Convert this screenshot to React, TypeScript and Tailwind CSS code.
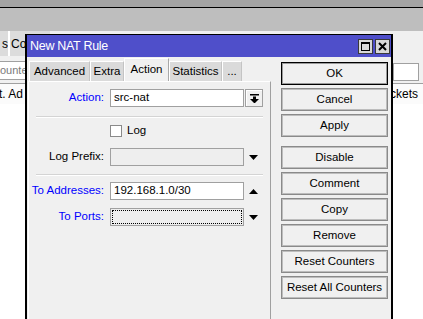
import React from "react";

const font = "font-['Liberation_Sans',Arial,sans-serif]";

function Btn({ label, def }: { label: string; def?: boolean }) {
  return (
    <div
      className={`h-[23px] flex items-center justify-center bg-[#f0f0f0] text-[11.5px] text-black ${
        def
          ? "border border-black shadow-[inset_0_0_0_1px_#9a9a9a]"
          : "border border-[#8a8a8a] shadow-[inset_0_0_0_1px_#bdbdbd]"
      }`}
    >
      {label}
    </div>
  );
}

function Down() {
  return (
    <svg width="9" height="5" viewBox="0 0 9 5">
      <polygon points="0,0 9,0 4.5,5" fill="#000" />
    </svg>
  );
}

function Up() {
  return (
    <svg width="9" height="5" viewBox="0 0 9 5">
      <polygon points="4.5,0 9,5 0,5" fill="#000" />
    </svg>
  );
}

function Sep() {
  return <div className="ml-[7px] w-[227px] h-[2px] border-t border-[#d4d4d4] border-b border-b-white" />;
}

const row = "grid grid-cols-[81px_134px_19px] items-center";
const label = "text-right pr-[6px] whitespace-nowrap";

export default function App() {
  return (
    <div className={`relative w-[423px] h-[319px] overflow-hidden bg-white ${font}`}>
      {/* desktop / background window */}
      <div className="h-[7px] bg-[#a4a4a4]" />
      <div className="h-px bg-black" />
      <div className="h-[23px] bg-[#bebebe]" />
      <div className="bg-[#f0f0f0]">
        <div className="h-[25px] flex text-[12px] text-black">
          <div className="w-[8px] bg-[#dcdcdc] flex items-center justify-end overflow-hidden">s</div>
          <div className="w-[2px] bg-white" />
          <div className="w-[40px] bg-[#dcdcdc] flex items-center pl-[1px]">Co</div>
        </div>
        <div className="h-[27px] flex justify-between items-start">
          <div className="mt-[5px] w-[26px] h-[19px] bg-white border border-l-0 border-[#a0a0a0] text-[11px] text-[#7a7a7a] flex items-center whitespace-nowrap">
            ounte
          </div>
          <div className="mt-[7px] mr-[4px] w-[26px] h-[18px] bg-white border border-[#a0a0a0]" />
        </div>
      </div>
      <div className="h-[21px] border-t border-[#a0a0a0] bg-[#fbfbfb] flex justify-between items-center text-[12px] text-black whitespace-nowrap">
        <span className="-ml-[1px]">t. Ad</span>
        <span className="mr-[5px]">ckets</span>
      </div>

      {/* dialog */}
      <div className="absolute left-[25px] top-[34px] w-[368px] h-[300px] border-x-2 border-t border-black bg-[#f0f0f0]">
        <div className="h-[22px] bg-[#4f4fca] flex items-center justify-between pl-[3px] pr-[1px]">
          <span className="text-white text-[12.5px] tracking-[-0.3px]">New NAT Rule</span>
          <div className="flex gap-[2px]">
            <div className="w-[15px] h-[15px] bg-[#d8d8d8] border border-[#3a3a3a] flex items-center justify-center">
              <div className="w-[9px] h-[9px] border border-black border-t-2" />
            </div>
            <div className="w-[15px] h-[15px] bg-[#d8d8d8] border border-[#3a3a3a] flex items-center justify-center">
              <svg width="9" height="9" viewBox="0 0 9 9">
                <path d="M1 1 L8 8 M8 1 L1 8" stroke="#000" strokeWidth="2" />
              </svg>
            </div>
          </div>
        </div>

        <div className="flex pt-[1px] pl-[1px] text-[11.5px] text-black">
          {/* left: tabs + panel */}
          <div className="w-[243px]">
            <div className="h-[23px] flex items-end pl-[1px]">
              <div className="w-[61px] h-[20px] bg-[#dadada] border-t border-l border-white border-r border-r-[#c4c4c4] flex items-center justify-center">Advanced</div>
              <div className="w-[34px] h-[20px] bg-[#dadada] border-t border-l border-white border-r border-r-[#c4c4c4] flex items-center justify-center">Extra</div>
              <div className="w-[45px] h-[23px] bg-[#f0f0f0] border-t border-l border-white border-r border-r-[#a8a8a8] flex items-start pt-[2px] justify-center">Action</div>
              <div className="w-[53px] h-[20px] bg-[#dadada] border-t border-l border-white border-r border-r-[#c4c4c4] flex items-center justify-center">Statistics</div>
              <div className="w-[20px] h-[20px] bg-[#dadada] border-t border-l border-white border-r border-r-[#c4c4c4] flex items-center justify-center">...</div>
            </div>
            <div className="h-[260px] border-t border-l border-white border-r border-r-[#a0a0a0] pt-[7px]">
              {/* Action */}
              <div className={row}>
                <div className={`${label} text-[#0000ff]`}>Action:</div>
                <div className="h-[18px] bg-white border border-[#a0a0a0] flex items-center pl-[3px]">src-nat</div>
                <div className="h-[18px] ml-[1px] bg-[#f0f0f0] border border-[#a0a0a0] shadow-[inset_1px_1px_0_#fff] flex items-center justify-center">
                  <svg width="9" height="9" viewBox="0 0 9 9">
                    <rect x="0" y="0" width="9" height="1.5" fill="#000" />
                    <rect x="3" y="2.5" width="3" height="2.5" fill="#000" />
                    <polygon points="0,5 9,5 4.5,9.5" fill="#000" />
                  </svg>
                </div>
              </div>
              <div className="mt-[9px]">
                <Sep />
              </div>
              {/* Log */}
              <div className={`mt-[6px] h-[13px] ${row}`}>
                <div />
                <div className="flex items-center gap-[5px] leading-none">
                  <div className="w-[12px] h-[12px] bg-white border border-[#8a8a8a]" />
                  <span>Log</span>
                </div>
                <div />
              </div>
              {/* Log Prefix */}
              <div className={`mt-[11px] ${row}`}>
                <div className={label}>Log Prefix:</div>
                <div className="h-[18px] bg-[#eeeeee] border border-[#a0a0a0]" />
                <div className="flex justify-center">
                  <Down />
                </div>
              </div>
              <div className="mt-[8px]">
                <Sep />
              </div>
              {/* To Addresses */}
              <div className={`mt-[6px] ${row}`}>
                <div className={`${label} text-[#0000ff]`}>To Addresses:</div>
                <div className="h-[18px] bg-white border border-[#a0a0a0] flex items-center pl-[3px]">192.168.1.0/30</div>
                <div className="flex justify-center">
                  <Up />
                </div>
              </div>
              {/* To Ports */}
              <div className={`mt-[8px] ${row}`}>
                <div className={`${label} text-[#0000ff]`}>To Ports:</div>
                <div className="h-[18px] bg-[#eeeeee] border border-[#a0a0a0] p-[1px]">
                  <div className="h-full border border-dotted border-black" />
                </div>
                <div className="flex justify-center">
                  <Down />
                </div>
              </div>
            </div>
          </div>

          {/* right: buttons */}
          <div className="ml-[10px] w-[107px] pt-[4px] flex flex-col">
            <div className="flex flex-col gap-[3px]">
              <Btn label="OK" def />
              <Btn label="Cancel" />
              <Btn label="Apply" />
            </div>
            <div className="mt-[9px] flex flex-col gap-[3px]">
              <Btn label="Disable" />
              <Btn label="Comment" />
              <Btn label="Copy" />
              <Btn label="Remove" />
              <Btn label="Reset Counters" />
              <Btn label="Reset All Counters" />
            </div>
          </div>
        </div>
      </div>
    </div>
  );
}
